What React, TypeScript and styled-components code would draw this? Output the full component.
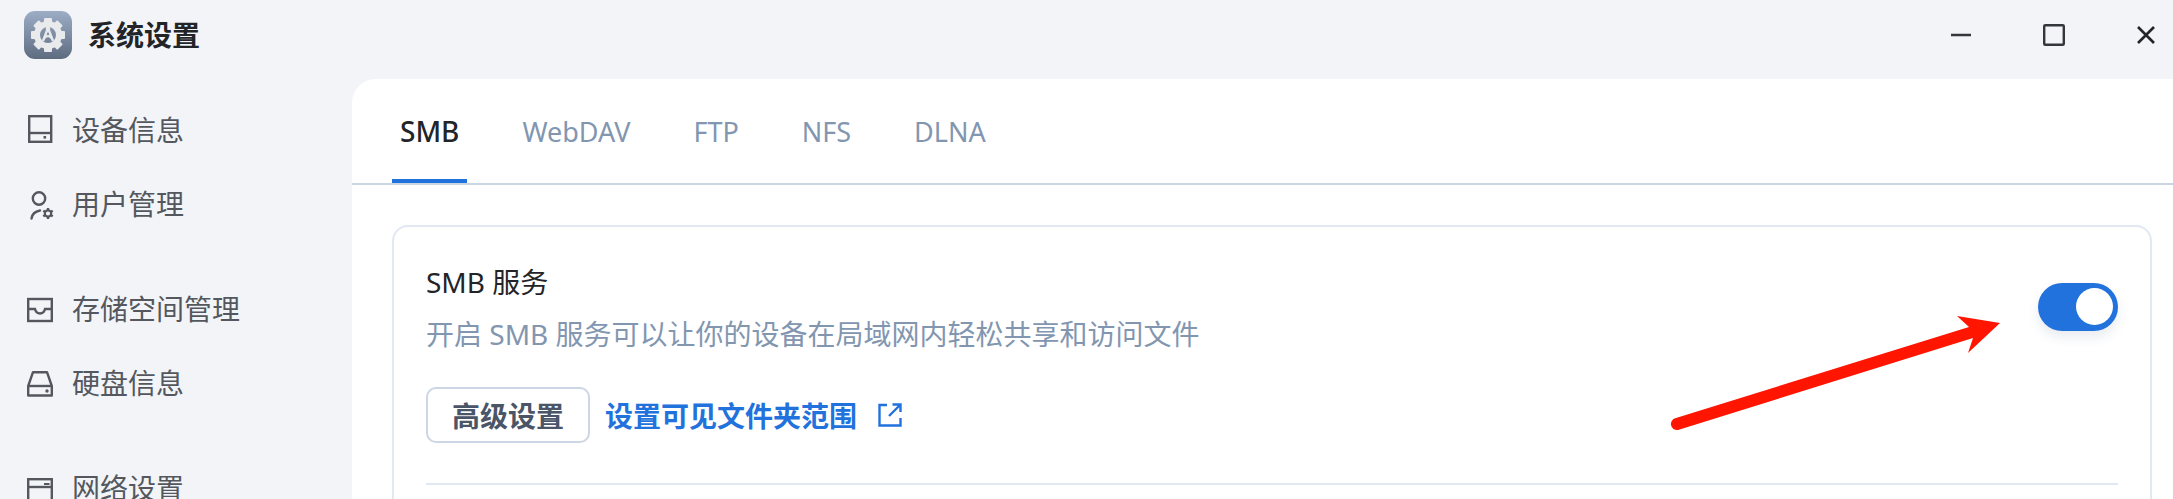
import styled, { createGlobalStyle } from "styled-components";

const GlobalStyle = createGlobalStyle`
    html, body {
        margin: 0;
        padding: 0;
        background: #f2f4f8;
    }
    * {
        box-sizing: border-box;
    }
`;

const Page = styled.div`
    width: 2173px;
    height: 499px;
    overflow: hidden;
    background: #f2f4f8;
    font-family: "Noto Sans", "Noto Sans CJK SC", sans-serif;
    font-size: 28px;
`;

const TitleBar = styled.header`
    height: 79px;
    display: flex;
    align-items: center;
    padding: 0 18px 9px 24px;
`;

const AppLogo = styled.div`
    width: 48px;
    height: 48px;
    border-radius: 11px;
    background: linear-gradient(#9cadc6, #5e6c80);
    display: flex;
    align-items: center;
    justify-content: center;
`;

const AppName = styled.div`
    margin-left: 16px;
    font-weight: 700;
    color: #222428;
    line-height: 40px;
`;

const WindowButtons = styled.div`
    margin-left: auto;
    display: flex;
    align-items: center;
    gap: 72px;
`;

const Body = styled.div`
    display: flex;
    height: 420px;
`;

const Sidebar = styled.nav`
    width: 352px;
    flex: none;
    padding: 14px 0 0 27px;
`;

const NavGroup = styled.div`
    margin-bottom: 31px;
`;

const NavItem = styled.div`
    height: 74px;
    display: flex;
    align-items: center;
    gap: 19px;
    padding-bottom: 2px;
    color: #54585e;
`;

const NavIcon = styled.svg`
    flex: none;
    overflow: visible;
    fill: none;
    stroke: #54585e;
    stroke-width: 2.4;
`;

const Panel = styled.main`
    flex: 1;
    background: #fff;
    border-top-left-radius: 24px;
`;

const TabBar = styled.div`
    height: 106px;
    display: flex;
    gap: 47px;
    padding-left: 40px;
    border-bottom: 2px solid #c9d5e2;
`;

const Tab = styled.div<{ $active?: boolean }>`
    height: 104px;
    padding: 4px 8px 0;
    display: flex;
    align-items: center;
    color: ${(p) => (p.$active ? "#222428" : "#8296b0")};
    font-size: ${(p) => (p.$active ? "28px" : "27px")};
    font-weight: ${(p) => (p.$active ? 500 : 400)};
    border-bottom: 4px solid ${(p) => (p.$active ? "#2272dd" : "transparent")};
`;

const Card = styled.section`
    position: relative;
    width: 1760px;
    height: 400px;
    margin: 40px 0 0 40px;
    padding: 35px 32px 0;
    border: 2px solid #e2e8f2;
    border-radius: 16px;
`;

const CardTop = styled.div`
    display: flex;
    justify-content: space-between;
`;

const CardTitle = styled.div`
    line-height: 40px;
    color: #222428;
`;

const CardDesc = styled.div`
    margin-top: 12px;
    line-height: 40px;
    color: #8296b0;
`;

const Switch = styled.div`
    width: 80px;
    height: 48px;
    margin-top: 21px;
    padding: 5px;
    display: flex;
    justify-content: flex-end;
    border-radius: 24px;
    background: #2272dd;
    box-shadow: 0 6px 12px rgba(34, 60, 100, 0.1);
`;

const SwitchKnob = styled.div`
    width: 37px;
    height: 37px;
    border-radius: 50%;
    background: #fff;
`;

const Actions = styled.div`
    margin-top: 33px;
    display: flex;
    align-items: center;
`;

const Button = styled.div`
    width: 164px;
    height: 56px;
    display: flex;
    align-items: center;
    justify-content: center;
    border: 2px solid #cdd6e4;
    border-radius: 10px;
    font-weight: 700;
    color: #4a5568;
`;

const Link = styled.div`
    margin-left: 15px;
    display: flex;
    align-items: center;
    gap: 21px;
    font-weight: 700;
    color: #2272dd;
`;

const Divider = styled.div`
    margin-top: 40px;
    height: 2px;
    background: #e2e8f2;
`;

const Arrow = styled.svg`
    position: absolute;
    left: 1276px;
    top: 87px;
`;

function LogoIcon() {
    return (
        <svg width="36" height="36" viewBox="0 0 36 36">
            {[0, 45, 90, 135, 180, 225, 270, 315].map((a) => (
                <rect key={a} x="14" y="1" width="8" height="7" rx="1" fill="#e9eaec" transform={`rotate(${a} 18 18)`} />
            ))}
            <circle cx="18" cy="18" r="11" fill="none" stroke="#e9eaec" strokeWidth="6" />
            <path d="M18 11 L13 24 M18 11 L23 24 M14.5 21 C16.5 18.5 19.5 18.5 21.5 21" fill="none" stroke="#e9eaec" strokeWidth="2.4" />
            <circle cx="18" cy="11.5" r="2.2" fill="#e9eaec" />
        </svg>
    );
}

function MinimizeIcon() {
    return (
        <svg width="20" height="20" viewBox="0 0 20 20">
            <path d="M0 10 H20" stroke="#33363a" strokeWidth="2.5" />
        </svg>
    );
}

function MaximizeIcon() {
    return (
        <svg width="22" height="22" viewBox="0 0 22 22">
            <rect x="1.2" y="1.2" width="19.6" height="19.6" rx="1" fill="none" stroke="#33363a" strokeWidth="2.4" />
        </svg>
    );
}

function CloseIcon() {
    return (
        <svg width="18" height="18" viewBox="0 0 18 18">
            <path d="M1 1 L17 17 M17 1 L1 17" stroke="#222428" strokeWidth="2.6" />
        </svg>
    );
}

function DeviceIcon() {
    return (
        <NavIcon width="26" height="28" viewBox="0 0 26 28">
            <rect x="2.2" y="1.2" width="22" height="25.6" />
            <path d="M2 18 H24" />
            <rect x="16.5" y="21" width="2.6" height="2.6" fill="#54585e" stroke="none" />
        </NavIcon>
    );
}

function UserIcon() {
    return (
        <NavIcon width="26" height="28" viewBox="0 0 26 28" strokeWidth="2.2">
            <circle cx="12" cy="9.5" r="6.2" />
            <path d="M4.5 29.5 C5 25.5 8 22.5 13 21.5" strokeLinecap="round" />
            {[0, 60, 120, 180, 240, 300].map((a) => (
                <rect key={a} x="19.8" y="19" width="2.4" height="2.6" fill="#54585e" stroke="none" transform={`rotate(${a} 21 24.5)`} />
            ))}
            <circle cx="21" cy="24.5" r="3.2" strokeWidth="2.2" />
        </NavIcon>
    );
}

function InboxIcon() {
    return (
        <NavIcon width="26" height="28" viewBox="0 0 26 28">
            <rect x="1.2" y="5" width="23.6" height="22" />
            <path d="M1 15 H8 C9.5 21 16.5 21 18 15 H25" />
        </NavIcon>
    );
}

function DiskIcon() {
    return (
        <NavIcon width="26" height="28" viewBox="0 0 26 28">
            <path d="M6 4.2 H20 L24.8 18 V27.5 H1.2 V18 Z" strokeLinejoin="round" />
            <path d="M1 18 H25" />
            <circle cx="20" cy="23" r="1.7" fill="#54585e" stroke="none" />
        </NavIcon>
    );
}

function NetworkIcon() {
    return (
        <NavIcon width="26" height="28" viewBox="0 0 26 28">
            <rect x="1.2" y="6.2" width="23.6" height="24" />
            <path d="M1 14 H25" />
            <rect x="17" y="10" width="5.5" height="2" fill="#54585e" stroke="none" />
        </NavIcon>
    );
}

function ExternalIcon() {
    return (
        <svg width="24" height="24" viewBox="0 0 24 24" fill="none" stroke="#2272dd" strokeWidth="2.4">
            <path d="M9 2 H1.5 V22.5 H22.5 V15" />
            <path d="M11 13 L22 2 M14.5 1.5 H22.5 V9" />
        </svg>
    );
}

export default function App() {
    return (
        <Page>
            <GlobalStyle />
            <TitleBar>
                <AppLogo>
                    <LogoIcon />
                </AppLogo>
                <AppName>系统设置</AppName>
                <WindowButtons>
                    <MinimizeIcon />
                    <MaximizeIcon />
                    <CloseIcon />
                </WindowButtons>
            </TitleBar>
            <Body>
                <Sidebar>
                    <NavGroup>
                        <NavItem><DeviceIcon />设备信息</NavItem>
                        <NavItem><UserIcon />用户管理</NavItem>
                    </NavGroup>
                    <NavGroup>
                        <NavItem><InboxIcon />存储空间管理</NavItem>
                        <NavItem><DiskIcon />硬盘信息</NavItem>
                    </NavGroup>
                    <NavGroup>
                        <NavItem><NetworkIcon />网络设置</NavItem>
                    </NavGroup>
                </Sidebar>
                <Panel>
                    <TabBar>
                        <Tab $active>SMB</Tab>
                        <Tab>WebDAV</Tab>
                        <Tab>FTP</Tab>
                        <Tab>NFS</Tab>
                        <Tab>DLNA</Tab>
                    </TabBar>
                    <Card>
                        <CardTop>
                            <div>
                                <CardTitle>SMB 服务</CardTitle>
                                <CardDesc>开启 SMB 服务可以让你的设备在局域网内轻松共享和访问文件</CardDesc>
                            </div>
                            <Switch>
                                <SwitchKnob />
                            </Switch>
                        </CardTop>
                        <Actions>
                            <Button>高级设置</Button>
                            <Link>
                                设置可见文件夹范围
                                <ExternalIcon />
                            </Link>
                        </Actions>
                        <Divider />
                        <Arrow width="335" height="122" viewBox="0 0 335 122">
                            <path d="M6 104 L299 13 L287 2 L330 9 L298 39 L303 24 L8 116 A6 6 0 0 1 6 104 Z" fill="#ff1500" />
                        </Arrow>
                    </Card>
                </Panel>
            </Body>
        </Page>
    );
}
